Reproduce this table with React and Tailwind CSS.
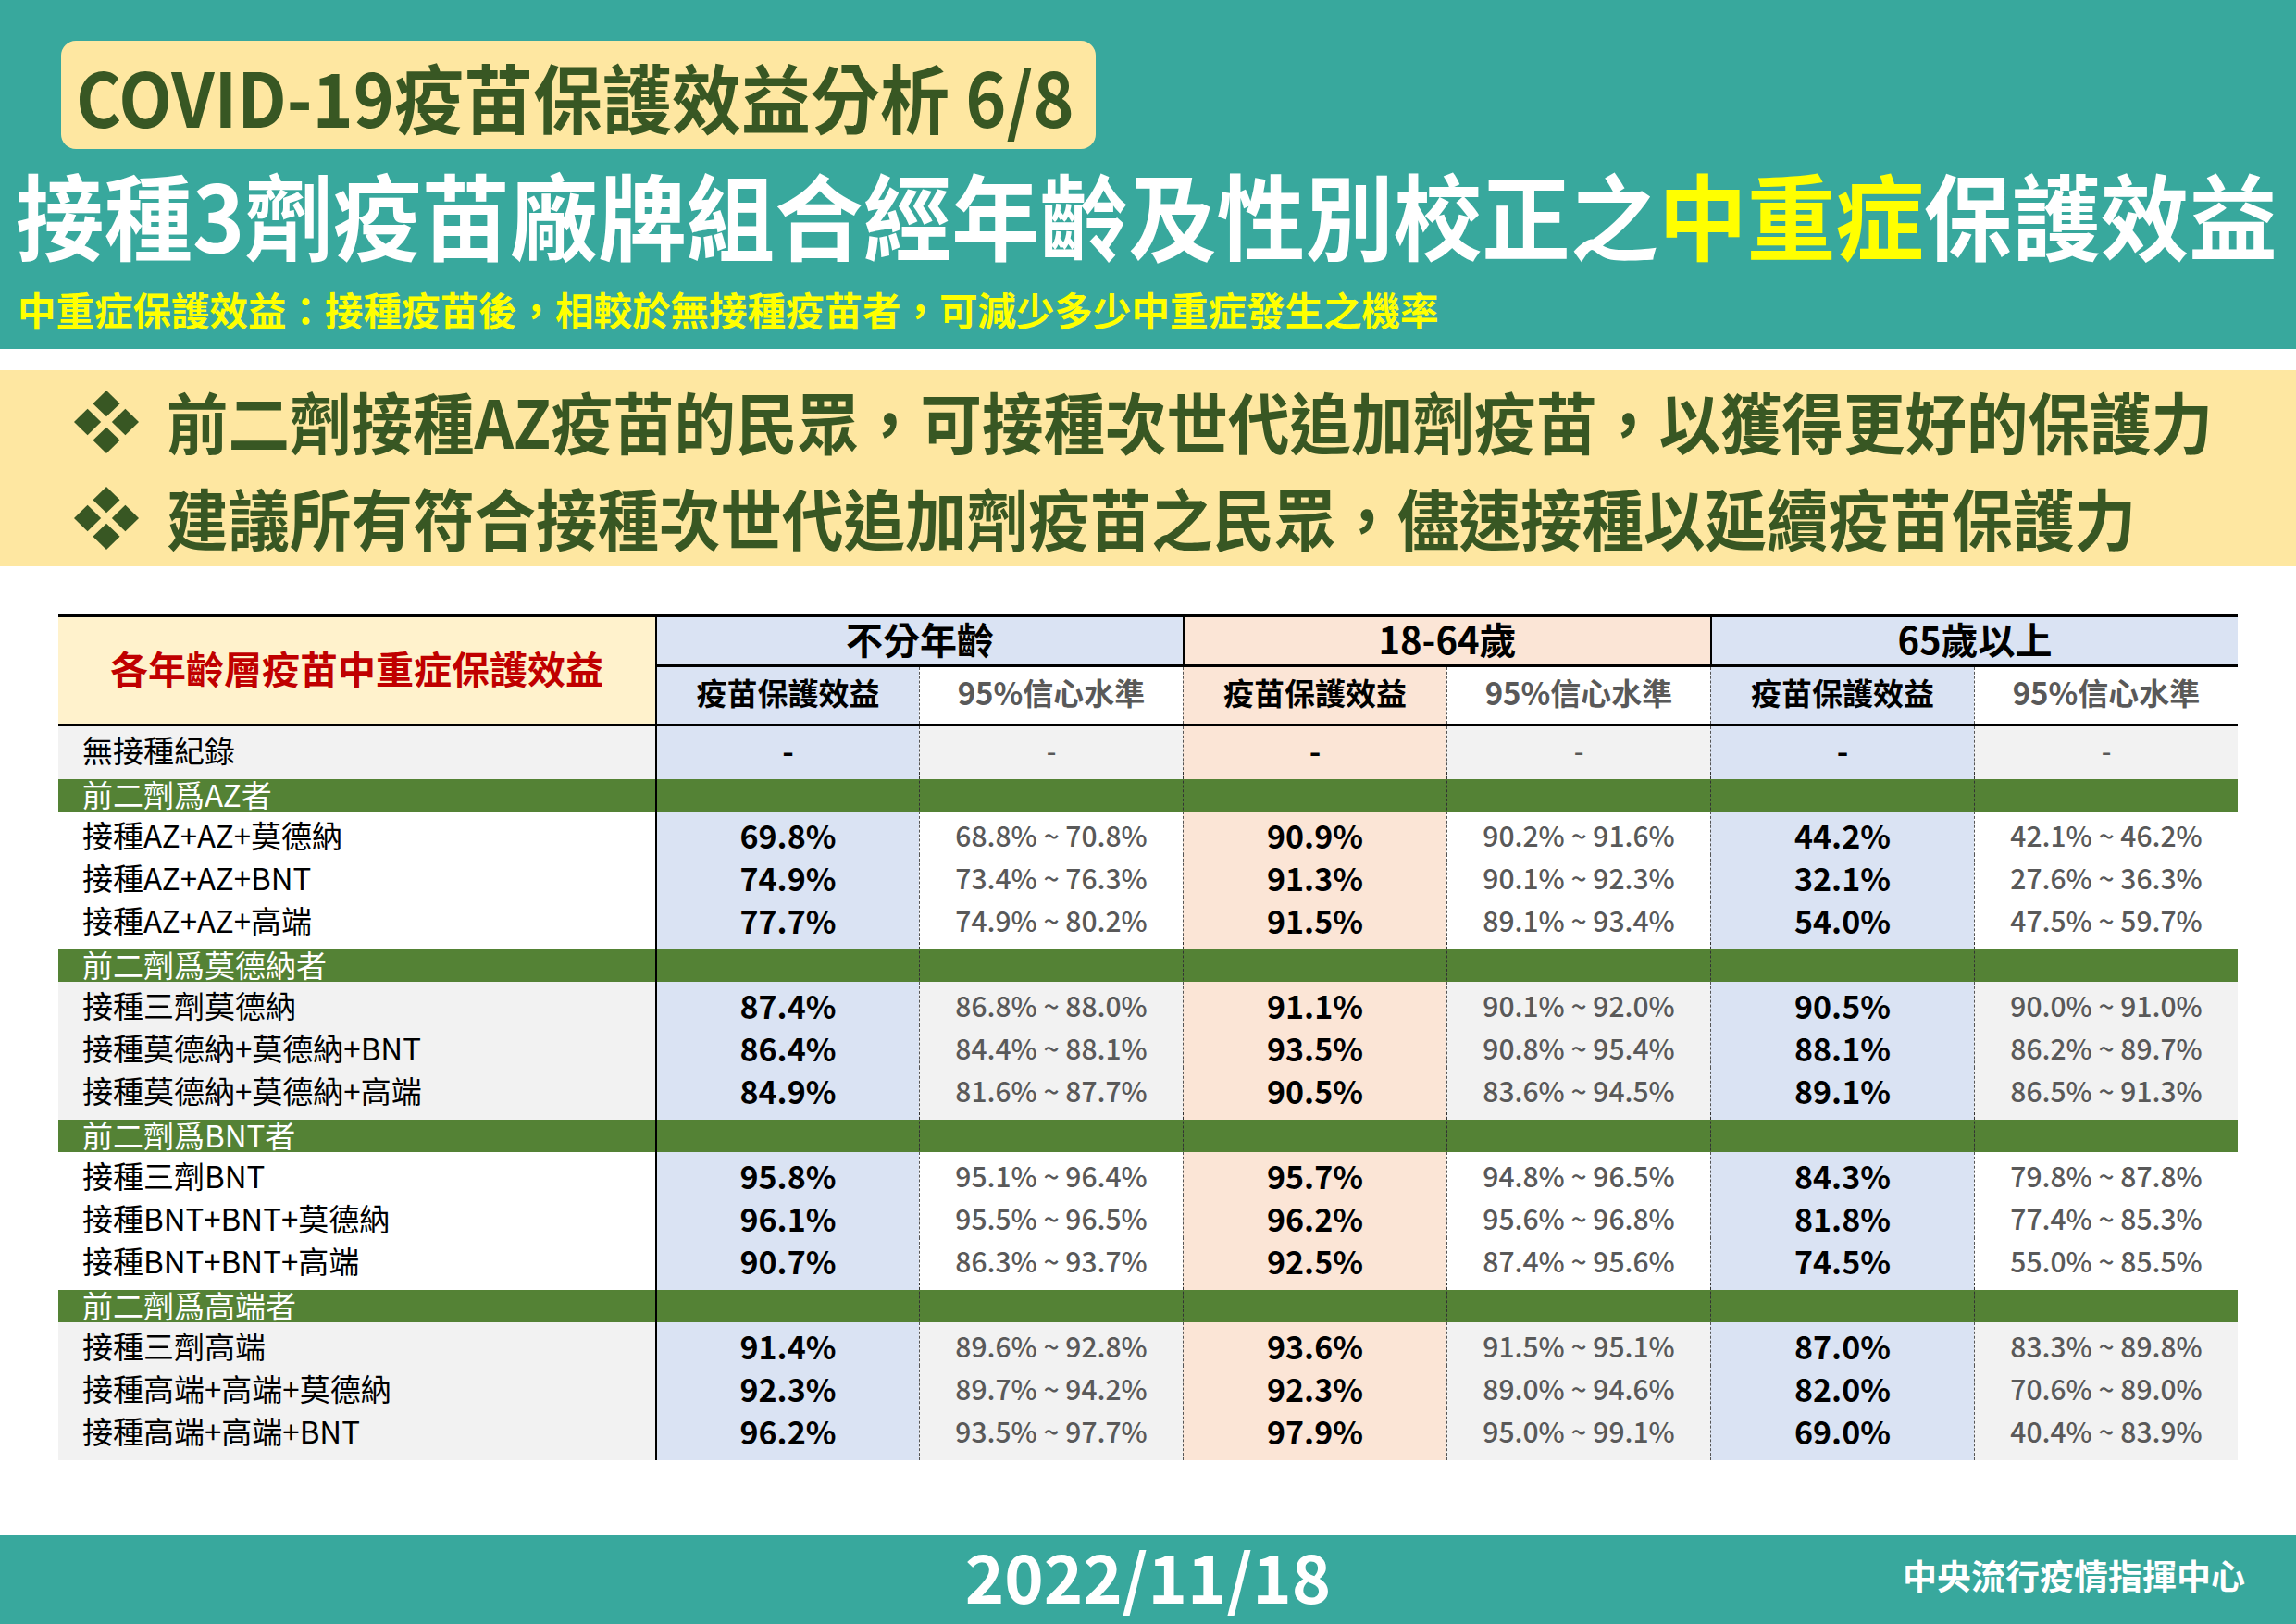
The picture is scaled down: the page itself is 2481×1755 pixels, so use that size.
const FONT = "font-['Noto_Sans_CJK_TC','Noto_Sans',sans-serif]";

const groups = [
  {
    name: '前二劑爲AZ者',
    shade: 'bg-white',
    rows: [
      ['接種AZ+AZ+莫德納', '69.8%', '68.8% ~ 70.8%', '90.9%', '90.2% ~ 91.6%', '44.2%', '42.1% ~ 46.2%'],
      ['接種AZ+AZ+BNT', '74.9%', '73.4% ~ 76.3%', '91.3%', '90.1% ~ 92.3%', '32.1%', '27.6% ~ 36.3%'],
      ['接種AZ+AZ+高端', '77.7%', '74.9% ~ 80.2%', '91.5%', '89.1% ~ 93.4%', '54.0%', '47.5% ~ 59.7%'],
    ],
  },
  {
    name: '前二劑爲莫德納者',
    shade: 'bg-[#f2f2f2]',
    rows: [
      ['接種三劑莫德納', '87.4%', '86.8% ~ 88.0%', '91.1%', '90.1% ~ 92.0%', '90.5%', '90.0% ~ 91.0%'],
      ['接種莫德納+莫德納+BNT', '86.4%', '84.4% ~ 88.1%', '93.5%', '90.8% ~ 95.4%', '88.1%', '86.2% ~ 89.7%'],
      ['接種莫德納+莫德納+高端', '84.9%', '81.6% ~ 87.7%', '90.5%', '83.6% ~ 94.5%', '89.1%', '86.5% ~ 91.3%'],
    ],
  },
  {
    name: '前二劑爲BNT者',
    shade: 'bg-white',
    rows: [
      ['接種三劑BNT', '95.8%', '95.1% ~ 96.4%', '95.7%', '94.8% ~ 96.5%', '84.3%', '79.8% ~ 87.8%'],
      ['接種BNT+BNT+莫德納', '96.1%', '95.5% ~ 96.5%', '96.2%', '95.6% ~ 96.8%', '81.8%', '77.4% ~ 85.3%'],
      ['接種BNT+BNT+高端', '90.7%', '86.3% ~ 93.7%', '92.5%', '87.4% ~ 95.6%', '74.5%', '55.0% ~ 85.5%'],
    ],
  },
  {
    name: '前二劑爲高端者',
    shade: 'bg-[#f2f2f2]',
    rows: [
      ['接種三劑高端', '91.4%', '89.6% ~ 92.8%', '93.6%', '91.5% ~ 95.1%', '87.0%', '83.3% ~ 89.8%'],
      ['接種高端+高端+莫德納', '92.3%', '89.7% ~ 94.2%', '92.3%', '89.0% ~ 94.6%', '82.0%', '70.6% ~ 89.0%'],
      ['接種高端+高端+BNT', '96.2%', '93.5% ~ 97.7%', '97.9%', '95.0% ~ 99.1%', '69.0%', '40.4% ~ 83.9%'],
    ],
  },
];

// value columns carry the age-group tint, CI columns take the row shade
const valueBg = ['bg-[#dae3f3]', 'bg-[#fbe5d6]', 'bg-[#dae3f3]'];
const GRID = 'grid grid-cols-[645px_repeat(6,285px)]';

function Diamonds() {
  return (
    <svg width="70" height="68" viewBox="0 0 72 72" preserveAspectRatio="none" className="shrink-0">
      <g fill="#385723">
        <path d="M36 0 L51 15 L36 30 L21 15 Z" />
        <path d="M15 21 L30 36 L15 51 L0 36 Z" />
        <path d="M57 21 L72 36 L57 51 L42 36 Z" />
        <path d="M36 42 L51 57 L36 72 L21 57 Z" />
      </g>
    </svg>
  );
}

function BodyRow({ cells, shade }) {
  const [label, ...vals] = cells;
  return (
    <div className={`${GRID} h-[46px]`}>
      <div className={`${shade} flex items-center pb-[6px] pl-[26px] text-[33px] text-black`}>{label}</div>
      {vals.map((v, i) => {
        const isValue = i % 2 === 0;
        const line = i === 0 ? 'border-l-2 border-solid border-black' : 'border-l border-dashed border-[#555]';
        return (
          <div
            key={i}
            className={`${line} ${isValue ? valueBg[i / 2] : shade} flex items-center justify-center pb-[6px] ${
              isValue ? 'text-[34px] font-bold text-black' : 'text-[30px] font-medium text-[#595959]'
            }`}
          >
            {v}
          </div>
        );
      })}
    </div>
  );
}

function GroupRow({ name }) {
  return (
    <div className={`${GRID} h-[46px] border-t-[3px] border-black bg-[#548235]`}>
      <div className="flex items-center pb-[6px] pl-[26px] text-[33px] text-white">{name}</div>
      {[0, 1, 2, 3, 4, 5].map((i) => (
        <div
          key={i}
          className={i === 0 ? 'border-l-2 border-solid border-black' : 'border-l border-dashed border-[#333]'}
        />
      ))}
    </div>
  );
}

export default function App() {
  return (
    <div className={`${FONT} flex h-[1755px] w-[2481px] flex-col overflow-hidden bg-white`}>
      {/* top banner */}
      <header className="flex h-[377px] flex-col bg-[#38a89d]">
        <div className="ml-[66px] mt-[44px] flex h-[117px] w-[1118px] items-center rounded-[16px] bg-[#fee7a1] pl-[16px]">
          <span className="origin-left scale-y-[1.08] whitespace-nowrap text-[75px] font-bold leading-none text-[#385723]">
            COVID-19疫苗保護效益分析 6/8
          </span>
        </div>
        <h1 className="ml-[17px] mt-[15px] flex h-[110px] items-center whitespace-nowrap text-[95.5px] font-bold leading-none text-white">
          <span className="scale-y-[1.06]">
            接種3劑疫苗廠牌組合經年齡及性別校正之<span className="text-[#ffff00]">中重症</span>保護效益
          </span>
        </h1>
        <p className="ml-[19px] mt-[24px] flex h-[50px] items-center whitespace-nowrap text-[41.5px] font-bold leading-none text-[#ffff00]">
          中重症保護效益：接種疫苗後，相較於無接種疫苗者，可減少多少中重症發生之機率
        </p>
      </header>

      {/* key messages */}
      <section className="mt-[23px] flex h-[212px] flex-col bg-[#fee7a1] pt-1">
        {[
          '前二劑接種AZ疫苗的民眾，可接種次世代追加劑疫苗，以獲得更好的保護力',
          '建議所有符合接種次世代追加劑疫苗之民眾，儘速接種以延續疫苗保護力',
        ].map((t) => (
          <div key={t} className="flex h-[104px] items-center gap-[30px] pl-[80px]">
            <Diamonds />
            <span className="scale-y-[1.08] whitespace-nowrap pb-[4px] text-[66.5px] font-bold leading-none text-[#385723]">
              {t}
            </span>
          </div>
        ))}
      </section>

      {/* table */}
      <div className="ml-[63px] mt-[52px] w-[2355px] border-y-[3px] border-black">
        <div className={`${GRID} grid-rows-[54px_61px] border-b-[3px] border-black`}>
          <div className="row-span-2 flex items-center justify-center bg-[#fff2cc] pb-[6px] text-[41px] font-bold text-[#c00000]">
            各年齡層疫苗中重症保護效益
          </div>
          {['不分年齡', '18-64歲', '65歲以上'].map((h, i) => (
            <div
              key={h}
              className={`${valueBg[i]} col-span-2 flex items-center justify-center border-b-[3px] border-l-2 border-black pb-[6px] text-[40px] font-bold text-black`}
            >
              {h}
            </div>
          ))}
          {[0, 1, 2, 3, 4, 5].map((i) => (
            <div
              key={i}
              className={`${i === 0 ? 'border-l-2 border-solid border-black' : 'border-l border-dashed border-[#555]'} ${
                i % 2 === 0 ? valueBg[i / 2] + ' text-black' : 'bg-white text-[#595959]'
              } flex items-center justify-center pb-[6px] text-[33px] font-bold`}
            >
              {i % 2 === 0 ? '疫苗保護效益' : '95%信心水準'}
            </div>
          ))}
        </div>

        <BodyRow cells={['無接種紀錄', '-', '-', '-', '-', '-', '-']} shade="bg-[#f2f2f2]" />

        {groups.map((g) => (
          <div key={g.name}>
            <GroupRow name={g.name} />
            {g.rows.map((r) => (
              <BodyRow key={r[0]} cells={r} shade={g.shade} />
            ))}
          </div>
        ))}
      </div>

      {/* footer */}
      <footer className="mt-auto grid h-[96px] grid-cols-3 items-center bg-[#38a89d] pb-[10px]">
        <div />
        <div className="text-center text-[72px] font-bold leading-none text-white">2022/11/18</div>
        <div className="pr-[55px] text-right text-[37px] font-bold leading-none text-white">中央流行疫情指揮中心</div>
      </footer>
    </div>
  );
}
